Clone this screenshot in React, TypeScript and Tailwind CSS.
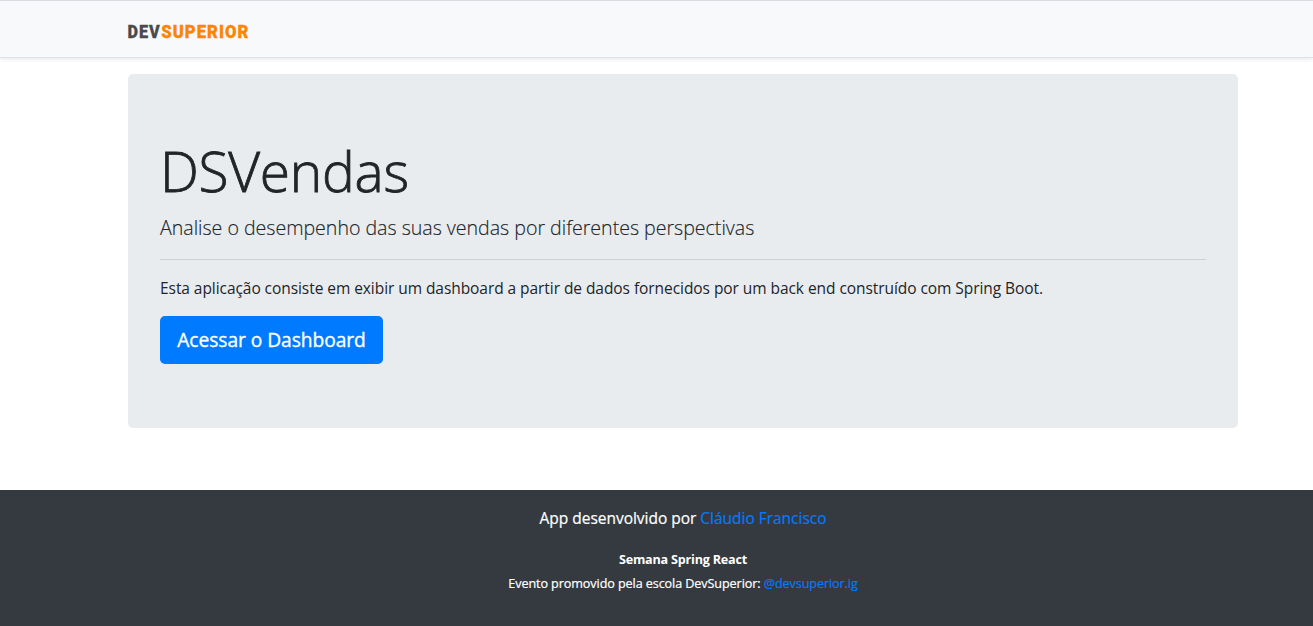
export default function App() {
  return (
    <div className="flex h-[626px] flex-col overflow-hidden bg-white font-['Open_Sans',sans-serif] text-base text-[#212529]">
      <header className="flex h-[58px] shrink-0 items-center border-y border-t-[#d9dbde] border-b-[#dee2e6] bg-[#f8f9fa] pl-[124px] shadow-[0_2px_4px_rgba(0,0,0,0.075)]">
        <svg width="140" height="30" viewBox="-4 -6 140 30" className="mt-1 font-['Roboto',sans-serif] text-[19px] font-black tracking-[1.2px]" aria-label="DevSuperior">
          <text x="-0.6" y="15.6" textLength="33.4" lengthAdjust="spacingAndGlyphs" fill="#4a4a4a" stroke="#4a4a4a" strokeWidth="0.3">DEV</text>
          <text x="33.2" y="15.6" textLength="88.3" lengthAdjust="spacingAndGlyphs" fill="#ff8400" stroke="#ff8400" strokeWidth="0.3">SUPERIOR</text>
        </svg>
      </header>
      <main className="ml-32 mt-4 flex h-[354px] w-[1110px] shrink-0 flex-col items-start rounded-[5px] bg-[#e9ecef] px-8 py-16">
        <h1 className="h-[67px] whitespace-nowrap text-[55px] font-light leading-[66px] tracking-[-0.25px] [-webkit-text-stroke:0.8px_#212529]">DSVendas</h1>
        <p className="mt-2 whitespace-nowrap text-[19.6px] font-light leading-[30px] tracking-[-0.02px] [-webkit-text-stroke:0.15px_#212529]">Analise o desempenho das suas vendas por diferentes perspectivas</p>
        <hr className="mb-4 mt-4 w-[1046px] border-[#cfd2d5]" />
        <p className="whitespace-nowrap text-[15.5px] leading-6 tracking-[-0.06px]">Esta aplicação consiste em exibir um dashboard a partir de dados fornecidos por um back end construído com Spring Boot.</p>
        <a href="#dashboard" className="mt-4 flex h-12 w-[223px] items-center justify-center whitespace-nowrap rounded-[5px] bg-[#007bff] text-[19.2px] tracking-[-0.05px] text-white [-webkit-text-stroke:0.35px_#ffffff]">Acessar o Dashboard</a>
      </main>
      <footer className="mt-[62px] flex grow flex-col items-center bg-[#343a40] pl-[53px] pt-4 text-white">
        <p className="whitespace-nowrap text-[15.5px] leading-6 tracking-[-0.02px] [-webkit-text-stroke:0.2px]">App desenvolvido por <a href="#autor" className="text-[#007bff]">Cláudio Francisco</a></p>
        <p className="mt-[18px] whitespace-nowrap text-[12.6px] font-bold leading-6 tracking-[-0.2px]">Semana Spring React</p>
        <p className="whitespace-nowrap text-[12.6px] leading-6 tracking-[-0.085px] [-webkit-text-stroke:0.2px]">Evento promovido pela escola DevSuperior: <a href="#escola" className="text-[#007bff]">@devsuperior.ig</a></p>
      </footer>
    </div>
  );
}
